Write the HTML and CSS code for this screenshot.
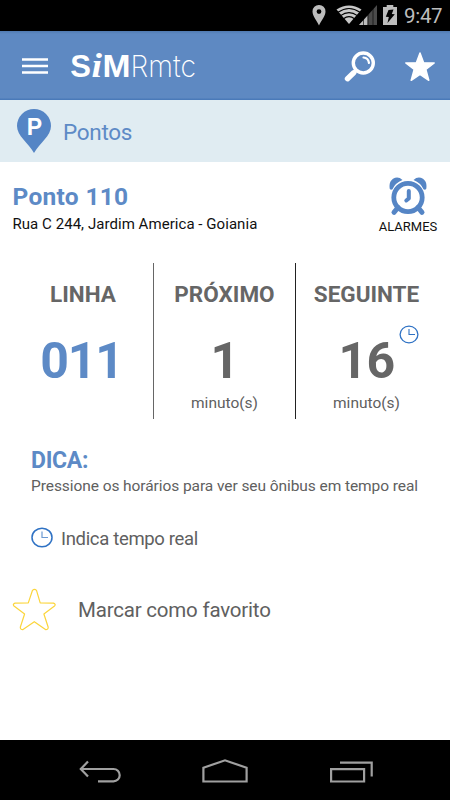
FILE: index.html
```html
<!DOCTYPE html>
<html lang="pt-BR">
<head>
<meta charset="utf-8">
<title>SiM Rmtc</title>
<link rel="stylesheet" href="styles.css">
</head>
<body>
<div class="screen">
  <div class="status">
    <svg class="status-icons" width="88" height="31" viewBox="0 0 88 31">
      <path fill="#bdbdbd" fill-rule="evenodd" d="M7 5a6.300 6.300 0 0 0-6.500 6.400C.5 16 5 20.500 7 25.500c2-5 6.500-9.500 6.500-14.100A6.300 6.300 0 0 0 7 5zm0 4.200a2.400 2.400 0 1 1 0 4.800 2.400 2.400 0 0 1 0-4.800z"/>
      <path fill="#c8c8c8" d="M37 24 24.500 9.500Q37 1.500 49.500 9.500z"/>
      <g fill="none" stroke="#000" stroke-width="1.100"><path d="M26 12.200q11-7.500 22 0M28.600 15.600q8.400-6 16.800 0M31.500 18.800q5.500-4.400 11 0"/></g>
      <path fill="#4b4b4b" d="M65 25V5L47 25z"/>
      <path fill="#bdbdbd" d="M47 25 55.500 15.800V25z"/>
      <path d="M51.500 17v8M56 12v13M61 7v18" stroke="#000" stroke-width=".6"/>
      <path fill="#bdbdbd" d="M71 7h3.700V5h6.600v2H85v18H71z"/>
      <path fill="#000" d="m76.500 10 5-.5-1.700 4.500 3 .3-7.300 8.700 1.300-6-3-.2z"/>
    </svg>
    <span class="status-time">9:47</span>
  </div>

  <header class="appbar">
    <svg class="menu" width="26" height="16" viewBox="0 0 26 16"><path d="M0 1.500h26M0 8h26M0 14.500h26" stroke="#fff" stroke-width="2.600"/></svg>
    <svg class="logo" width="130" height="36" viewBox="0 0 130 36">
      <text class="logo-bold" x="-.8" y="29">S</text>
      <text class="logo-i" x="20.500" y="29" textLength="10.500" lengthAdjust="spacingAndGlyphs">i</text>
      <text class="logo-bold" x="31.500" y="29" textLength="28" lengthAdjust="spacingAndGlyphs">M</text>
      <text class="logo-thin" x="59.500" y="29" textLength="65.500" lengthAdjust="spacingAndGlyphs">Rmtc</text>
    </svg>
    <svg class="search" width="32" height="32" viewBox="0 0 32 32">
      <circle cx="19.300" cy="12" r="10" fill="none" stroke="#fff" stroke-width="3.400"/>
      <path d="M12.500 19 9.500 22" stroke="#fff" stroke-width="3.500"/>
      <path d="M9.700 21.800 3.500 27.700" stroke="#fff" stroke-width="5.400" stroke-linecap="round"/>
      <path d="M19.500 6.500q4.800.3 5.500 5.500" fill="none" stroke="#fff" stroke-width="2.200" stroke-linecap="round"/>
    </svg>
    <svg class="fav" width="32" height="32" viewBox="0 0 32 32"><path fill="#fff" stroke="#fff" stroke-width="1.500" stroke-linejoin="round" d="m16 2 3.600 9.700 10.600.3-8.400 6.500 3 10.800L16 23.300l-8.800 6 3-10.800-8.400-6.500 10.600-.3z"/></svg>
  </header>

  <div class="section">
    <svg width="36" height="46" viewBox="0 0 36 46">
      <path fill="#5585c5" d="M18 1A17 17 0 0 0 1 18c0 10 11 16.500 17 27 6-10.500 17-17 17-27A17 17 0 0 0 18 1z"/>
      <text class="pin-letter" x="10.800" y="27">P</text>
    </svg>
    <span class="section-name">Pontos</span>
  </div>

  <main>
    <div class="stop">
      <div class="stop-info">
        <h1>Ponto 110</h1>
        <p>Rua C 244, Jardim America - Goiania</p>
      </div>
      <div class="alarm">
        <svg width="38" height="40" viewBox="0 0 38 40">
          <g fill="#5585c5"><path d="M.8 12Q-.5 5 4 1.800 9-1.200 13.500 3 6 6 3.500 12.300 2 13.200.8 12zM37.200 12Q38.500 5 34 1.800 29-1.200 24.500 3 32 6 34.500 12.300 36 13.200 37.200 12z"/></g>
          <circle cx="19" cy="20.500" r="14.200" fill="none" stroke="#5585c5" stroke-width="4.800"/>
          <path d="m9 30.500-4 4.800M29 30.500l4 4.800" stroke="#5585c5" stroke-width="5" stroke-linecap="round"/>
          <path d="M19.800 14v7.500l-2.500 2" fill="none" stroke="#5585c5" stroke-width="4" stroke-linecap="round" stroke-linejoin="round"/>
        </svg>
        <span>ALARMES</span>
      </div>
    </div>

    <div class="times">
      <div class="col line">
        <h2>LINHA</h2>
        <div class="num">011</div>
      </div>
      <div class="col next">
        <h2>PRÓXIMO</h2>
        <div class="num">1</div>
        <div class="unit">minuto(s)</div>
      </div>
      <div class="col after">
        <h2>SEGUINTE</h2>
        <div class="num">16</div>
        <div class="unit">minuto(s)</div>
        <svg class="live" width="20" height="19" viewBox="0 0 20 19"><ellipse cx="10" cy="9.500" rx="8.900" ry="8.300" fill="none" stroke="#2f72c4" stroke-width="1.300"/><path d="M10 4v5.500h6" fill="none" stroke="#2f72c4" stroke-width="1.100"/></svg>
      </div>
    </div>

    <div class="tip">
      <h3>DICA:</h3>
      <p>Pressione os horários para ver seu ônibus em tempo real</p>
    </div>

    <div class="legend">
      <svg width="22" height="21" viewBox="0 0 22 21"><ellipse cx="11" cy="10.500" rx="10" ry="9.300" fill="none" stroke="#2f72c4" stroke-width="1.500"/><path d="M11 4.500v6h6" fill="none" stroke="#6c9ad2" stroke-width="1.200"/></svg>
      <span>Indica tempo real</span>
    </div>

    <div class="mark">
      <svg width="44" height="43" viewBox="0 0 44 43"><path fill="none" stroke="#fbd53c" stroke-width="1.200" stroke-linejoin="round" d="M20.500 2.300Q22.500 .300 24.500 2.300L28.200 14.900 41.500 15.100Q44.200 16.200 42.500 18L31.900 26 36.200 39.200Q36.200 41.800 33.500 41.600L22.300 33.700 11 41.600Q8.300 41.800 8.300 39.200L12.600 26 2 18Q.3 16.200 3 15.100L16.300 14.900z"/></svg>
      <span>Marcar como favorito</span>
    </div>
  </main>

  <nav class="navbar">
    <svg width="450" height="60" viewBox="0 0 450 60" fill="none" stroke="#a0a0a0" stroke-width="2.200">
      <path d="M81 29h32.500a6.200 6.200 0 0 1 0 12.400H98M88 21.500 80.800 29l7.200 7.500"/>
      <path d="M203.400 41.500V27.800L225 20.300l21.600 7.500v13.700z"/>
      <path d="M331.100 29.100h33v12.400h-33zM340 22.600h31.700v14"/>
    </svg>
  </nav>
</div>
</body>
</html>
```

FILE: styles.css
```css
* { box-sizing: border-box; margin: 0; padding: 0; }
body { width: 450px; height: 800px; overflow: hidden; background: #fff; font-family: Roboto, "Liberation Sans", sans-serif; color: #606060; }
svg { display: block; flex: none; }
span, h1, h2, h3, p { white-space: nowrap; }
.screen { display: flex; flex-direction: column; height: 800px; }

.status { height: 31px; background: #000; display: flex; align-items: center; padding-left: 312px; }
.status-time { margin-left: 4px; margin-top: 1px; font-size: 20.500px; line-height: 31px; color: #bdbdbd; letter-spacing: -0.300px; }

.appbar { height: 69px; display: flex; align-items: flex-start; padding-left: 22px; background: linear-gradient(#507ab0, #5e89c2 3px, #5e89c2 67px, #4a7ab9 68px); }
.menu { margin-top: 27px; }
.logo { margin: 17px 0 0 23px; }
.logo text { fill: #fff; }
.logo-bold { font: bold 31px "Liberation Sans", sans-serif; }
.logo-i { font: italic bold 34px "Liberation Serif", serif; }
.logo-thin { font: 200 30px Inter, Roboto, sans-serif; }
.search { margin: 20px 0 0 143px; }
.fav { margin: 20px 0 0 28px; }

.section { height: 62px; padding-left: 16px; display: flex; align-items: center; background: #e0ecf2; }
.pin-letter { font: bold 23px "Liberation Sans", sans-serif; fill: #fff; }
.section-name { margin: 2px 0 0 11px; font-size: 22.500px; line-height: 30px; letter-spacing: -0.300px; color: #5d8ac6; }

main { flex: 1; }
.stop { height: 101px; padding: 15px 13px 0 12px; display: flex; justify-content: space-between; }
.stop-info { padding: 6px 0 0 0.500px; }
h1 { font-size: 24.500px; line-height: 28px; letter-spacing: 0.300px; color: #5d8ac6; font-weight: 700; }
.stop-info p { margin-top: 4px; font-size: 15px; line-height: 18px; letter-spacing: 0.050px; color: #111; }
.alarm { width: 58px; display: flex; flex-direction: column; align-items: center; }
.alarm span { font-size: 13px; line-height: 16px; color: #111; margin-top: 2px; }

.times { height: 156px; display: grid; grid-template-columns: 153px 143px 154px; }
.col { position: relative; padding-top: 17px; text-align: center; }
.line { padding-left: 13px; }
.next { border-left: 1px solid #666; border-right: 1px solid #222; }
.after { padding-right: 13px; }
h2 { font-size: 22.500px; line-height: 28px; font-weight: 700; color: #666; }
.num { margin-top: 23px; font-size: 50px; line-height: 60px; font-weight: 700; letter-spacing: -0.800px; color: #666; }
.line .num { margin-left: -3px; letter-spacing: -1.200px; color: #5d8ac6; }
.unit { margin-top: 2px; font-size: 15.500px; line-height: 20px; }
.live { position: absolute; left: 103px; top: 62px; }

.tip { padding: 28px 0 0 31px; height: 92px; }
h3 { font-size: 23px; line-height: 28px; letter-spacing: -0.300px; color: #5d8ac6; }
.tip p { margin-top: 1px; font-size: 15.500px; line-height: 20px; letter-spacing: -0.070px; }
.legend { height: 52px; padding-left: 31px; display: flex; align-items: center; }
.legend span { margin: 3px 0 0 8px; font-size: 18.500px; letter-spacing: -0.330px; }
.mark { height: 92px; padding-left: 12px; display: flex; align-items: center; }
.mark span { margin-left: 22px; margin-top: 2px; font-size: 20.500px; letter-spacing: -0.200px; }

.navbar { height: 60px; background: #000; }
```
